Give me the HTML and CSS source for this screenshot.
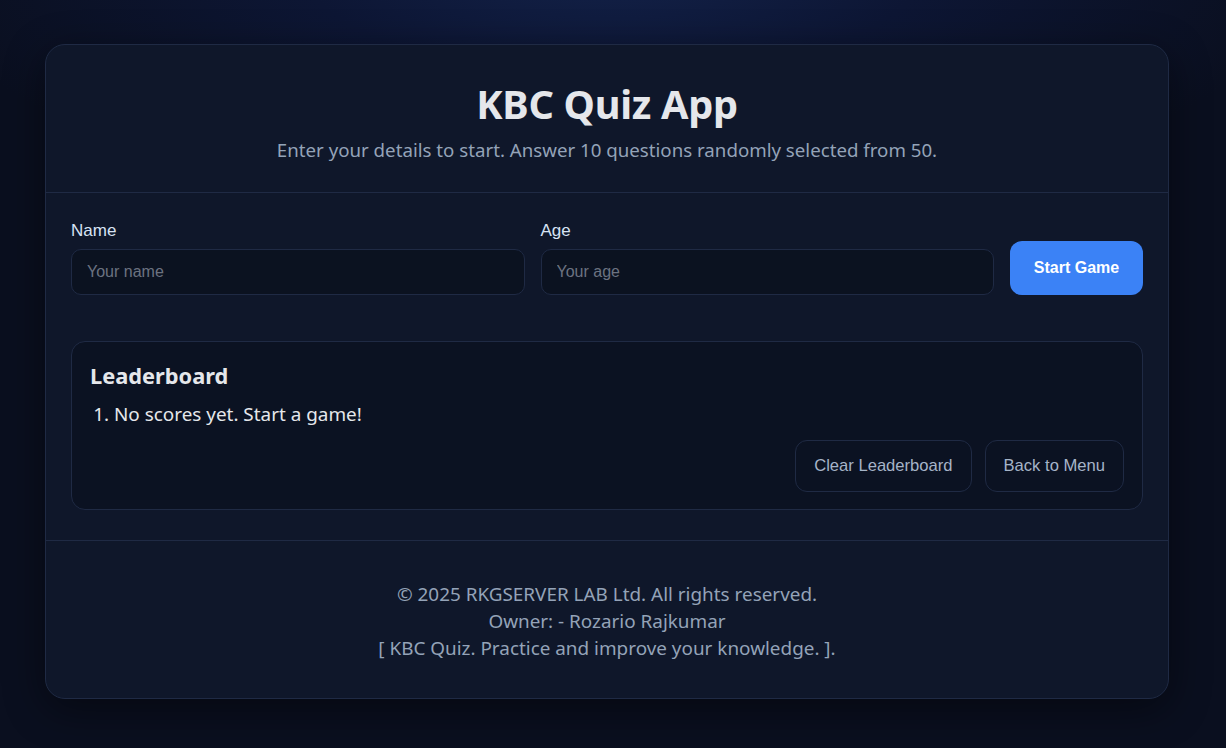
FILE: index.html
```html
<!DOCTYPE html>
<html lang="en">
<head>
<meta charset="utf-8">
<title>KBC Quiz App</title>
<link rel="stylesheet" href="styles.css">
</head>
<body>
<div class="page">
  <main class="card">
    <header class="card-header">
      <h1 class="title">KBC Quiz App</h1>
      <p class="subtitle">Enter your details to start. Answer 10 questions randomly selected from 50.</p>
    </header>
    <section class="card-body">
      <div class="form-row">
        <div class="field">
          <label class="label" for="name">Name</label>
          <input class="input" id="name" type="text" placeholder="Your name">
        </div>
        <div class="field">
          <label class="label" for="age">Age</label>
          <input class="input" id="age" type="text" placeholder="Your age">
        </div>
        <button class="btn-primary" type="button">Start Game</button>
      </div>
      <div class="leaderboard">
        <h2 class="lb-title">Leaderboard</h2>
        <ol class="lb-list">
          <li>No scores yet. Start a game!</li>
        </ol>
        <div class="lb-actions">
          <button class="btn-ghost" type="button">Clear Leaderboard</button>
          <button class="btn-ghost" type="button">Back to Menu</button>
        </div>
      </div>
    </section>
    <footer class="card-footer">
      <div>© 2025 RKGSERVER LAB Ltd. All rights reserved.</div>
      <div>Owner: - Rozario Rajkumar</div>
      <div>[ KBC Quiz. Practice and improve your knowledge. ].</div>
    </footer>
  </main>
</div>
</body>
</html>
```
FILE: styles.css
```css
html, body {
  margin: 0;
  height: 100%;
}
body {
  background: radial-gradient(ellipse 700px 260px at 50% -40px, #13224a 0%, #0d1634 45%, #0a0f1f 100%) no-repeat, #0a0e1c;
  font-family: "Noto Sans", "Open Sans", sans-serif;
  color: #e5e7eb;
}
.page {
  padding: 44px 57px 0 45px;
}
.card {
  width: 1124px;
  box-sizing: border-box;
  background: #0f172a;
  border: 1px solid #1f2a44;
  border-radius: 20px;
  box-shadow: 0 10px 40px rgba(0, 0, 0, 0.45);
  overflow: hidden;
}
.card-header {
  text-align: center;
  padding: 34px 26px 29px;
  border-bottom: 1px solid #1f2a44;
}
.title {
  margin: 0;
  font-size: 39.7px;
  line-height: 50px;
  font-weight: 700;
  color: #e5e7eb;
  letter-spacing: -0.3px;
}
.subtitle {
  margin: 8px 0 0;
  font-size: 18.7px;
  line-height: 26px;
  color: #94a3b8;
}
.card-body {
  padding: 28px 25px 30px;
  border-bottom: 1px solid #1f2a44;
}
.form-row {
  display: flex;
  align-items: flex-end;
  gap: 16px;
}
.field {
  flex: 1;
  display: flex;
  flex-direction: column;
  gap: 8px;
}
.label {
  font-family: "Liberation Sans", Arial, sans-serif;
  font-size: 17px;
  line-height: 20px;
  color: #d7e3f4;
}
.input {
  height: 46px;
  box-sizing: border-box;
  background: #0b1220;
  border: 1px solid #1f2a44;
  border-radius: 10px;
  padding: 0 15px;
  font-family: "Liberation Sans", Arial, sans-serif;
  font-size: 16px;
  color: #e5e7eb;
  outline: none;
}
.input::placeholder {
  color: #6b7280;
}
.btn-primary {
  height: 54px;
  width: 133px;
  border: none;
  border-radius: 12px;
  background: #3b82f6;
  color: #ffffff;
  font-family: "Liberation Sans", Arial, sans-serif;
  font-weight: 700;
  font-size: 16px;
}
.leaderboard {
  margin-top: 46px;
  background: #0b1222;
  border: 1px solid #1f2a44;
  border-radius: 14px;
  padding: 20px 18px 17px;
}
.lb-title {
  margin: 0;
  font-size: 21.8px;
  line-height: 28px;
  font-weight: 700;
  color: #e5e7eb;
}
.lb-list {
  margin: 11px 0 0;
  padding-left: 24px;
  font-size: 18.9px;
  line-height: 26px;
  color: #e5e7eb;
}
.lb-actions {
  display: flex;
  justify-content: flex-end;
  gap: 13px;
  margin-top: 13px;
}
.btn-ghost {
  height: 52px;
  padding: 0 18px;
  background: #0b1222;
  border: 1px solid #1f2a44;
  border-radius: 12px;
  color: #a6b4c8;
  font-family: "Liberation Sans", Arial, sans-serif;
  font-size: 16.6px;
}
.card-footer {
  text-align: center;
  padding: 40px 26px 36px;
  font-size: 18.9px;
  line-height: 27px;
  color: #94a3b8;
}
```
